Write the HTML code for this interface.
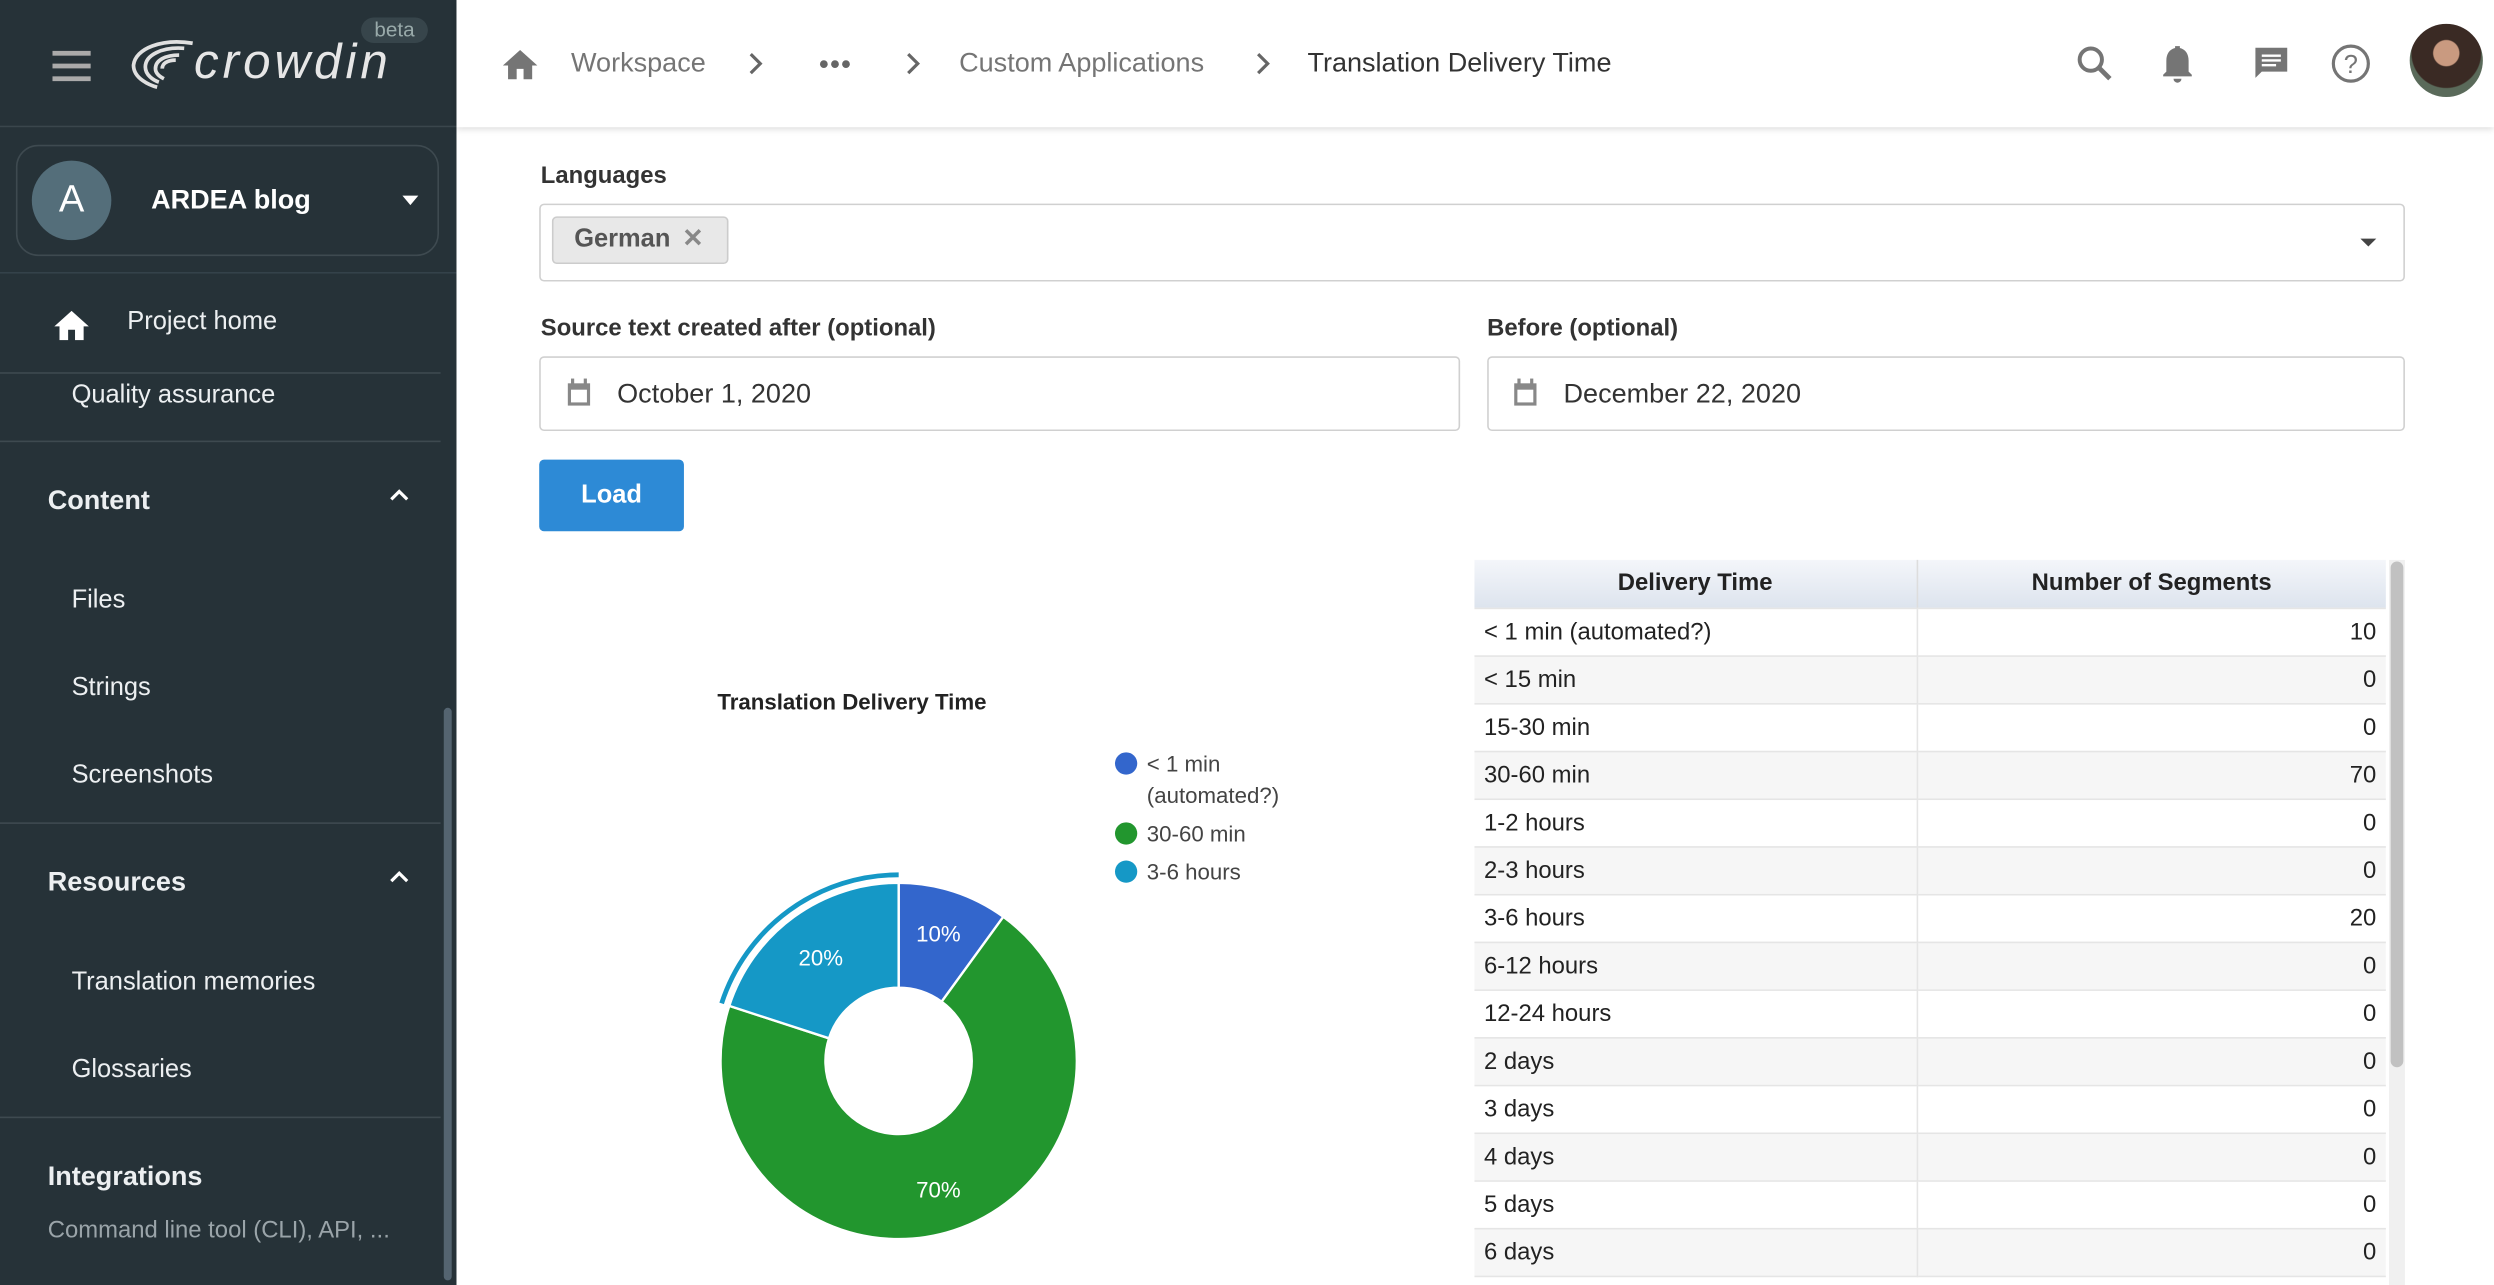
<!DOCTYPE html>
<html><head><meta charset="utf-8">
<style>
*{box-sizing:border-box;margin:0;padding:0}
html,body{width:2494px;height:1285px;overflow:hidden;background:#fff;font-family:"Liberation Sans",sans-serif}
#w{width:1568px;height:808px;transform:scale(1.590561);transform-origin:0 0;position:relative}
.sb{position:absolute;left:0;top:0;width:287px;height:808px;background:#263238;color:#fff}
.sb .t{position:absolute;font-size:16px;color:#eceff1}
.sb .h{position:absolute;font-size:17px;font-weight:bold;color:#eceff1;left:30px}
.sb .ln{position:absolute;left:0;width:277px;height:1px;background:#3e4a50}
.top{position:absolute;left:287px;top:0;width:1281px;height:80px;background:#fff;box-shadow:0 1px 4px rgba(0,0,0,.15)}
.bc{position:absolute;top:30px;font-size:17px;color:#757575}
.lbl{position:absolute;font-size:15px;font-weight:bold;color:#333}
.inp{position:absolute;border:1px solid #d0d0d0;border-radius:3px;background:#fff}
table{border-collapse:collapse;font-size:15px;color:#222}
td{height:30px;border-bottom:1px solid #e5e5e5;padding:0 6px}
</style></head><body><div id="w">
<div class="sb">
 <div style="position:absolute;left:33px;top:32px;width:24px;height:3px;background:#aaa;box-shadow:0 8px 0 #aaa,0 16px 0 #aaa"></div>
 <svg style="position:absolute;left:80px;top:24px" width="44" height="34" viewBox="0 0 40 32"><g fill="none" stroke="#e0e0e0" stroke-width="2.2"><path d="M38 3C20 0 4 6 3 16c0 8 10 12 14 13"/><path d="M33 6C20 5 10 10 10 17c0 5 5 8 8 9"/><path d="M30 10c-8 0-14 3-14 8 0 3 3 5 5 6"/><path d="M28 13c-5 0-8 2-8 5"/></g></svg>
 <div style="position:absolute;left:122px;top:22px;font-size:31px;font-style:italic;color:#e6e6e6;letter-spacing:2.5px;line-height:34px">crowdin</div>
 <div style="position:absolute;left:227px;top:11px;width:42px;height:16px;border-radius:8px;background:#37454b;color:#9aa;font-size:13px;text-align:center;line-height:16px">beta</div>
 <div class="ln" style="top:79px;width:287px;background:#3a464c"></div>
 <div style="position:absolute;left:10px;top:91px;width:266px;height:70px;border:1px solid #3e4a50;border-radius:14px;background:#263238"></div>
 <div style="position:absolute;left:20px;top:101px;width:50px;height:50px;border-radius:50%;background:#546e7a;font-size:24px;text-align:center;line-height:50px;color:#fff">A</div>
 <div class="t" style="left:95px;top:116px;font-size:17px;font-weight:bold;color:#fff">ARDEA blog</div>
 <div style="position:absolute;left:253px;top:123px;border:5px solid transparent;border-top:6px solid #fff"></div>
 <div class="ln" style="top:171px;width:287px;background:#34424a"></div>
 <svg style="position:absolute;left:32px;top:192px" width="26" height="22" viewBox="0 0 24 20"><path d="M10 20v-6h4v6h5v-8h3L12 3 2 12h3v8z" fill="#fff"/></svg>
 <div class="t" style="left:80px;top:194px">Project home</div>
 <div class="ln" style="top:234px"></div>
 <div class="t" style="left:45px;top:240px">Quality assurance</div>
 <div class="ln" style="top:277px"></div>
 <div class="h" style="top:305px">Content</div>
 <svg style="position:absolute;left:244px;top:306px" width="14" height="10"><path d="M2 8l5-5 5 5" stroke="#fff" stroke-width="2" fill="none"/></svg>
 <div class="t" style="left:45px;top:369px">Files</div>
 <div class="t" style="left:45px;top:424px">Strings</div>
 <div class="t" style="left:45px;top:479px">Screenshots</div>
 <div class="ln" style="top:517px"></div>
 <div class="h" style="top:545px">Resources</div>
 <svg style="position:absolute;left:244px;top:546px" width="14" height="10"><path d="M2 8l5-5 5 5" stroke="#fff" stroke-width="2" fill="none"/></svg>
 <div class="t" style="left:45px;top:609px">Translation memories</div>
 <div class="t" style="left:45px;top:664px">Glossaries</div>
 <div class="ln" style="top:702px"></div>
 <div class="h" style="top:730px">Integrations</div>
 <div class="t" style="left:30px;top:765px;font-size:15px;color:#9aa4a9">Command line tool (CLI), API, ...</div>
 <div style="position:absolute;left:279px;top:445px;width:5px;height:360px;border-radius:3px;background:#546470"></div>
</div>
<div class="top">
 <svg style="position:absolute;left:27px;top:28px" width="26" height="22" viewBox="0 0 24 20"><path d="M10 20v-6h4v6h5v-8h3L12 3 2 12h3v8z" fill="#757575"/></svg>
 <div class="bc" style="left:72px">Workspace</div>
 <svg style="position:absolute;left:182px;top:32px" width="12" height="16"><path d="M3 2l6 6-6 6" stroke="#666" stroke-width="2" fill="none"/></svg>
 <div class="bc" style="left:228px;top:31px;letter-spacing:1px;color:#666;font-weight:bold">•••</div>
 <svg style="position:absolute;left:281px;top:32px" width="12" height="16"><path d="M3 2l6 6-6 6" stroke="#666" stroke-width="2" fill="none"/></svg>
 <div class="bc" style="left:316px">Custom Applications</div>
 <svg style="position:absolute;left:501px;top:32px" width="12" height="16"><path d="M3 2l6 6-6 6" stroke="#666" stroke-width="2" fill="none"/></svg>
 <div class="bc" style="left:535px;color:#333">Translation Delivery Time</div>
 <svg style="position:absolute;left:1018px;top:28px" width="24" height="24"><circle cx="9.5" cy="9.5" r="7" stroke="#757575" stroke-width="2.5" fill="none"/><path d="M14.5 14.5l7 7" stroke="#757575" stroke-width="3"/></svg>
 <svg style="position:absolute;left:1070px;top:27px" width="24" height="26" viewBox="0 0 24 26"><path d="M12 25a2.5 2.5 0 0 0 2.5-2.5h-5A2.5 2.5 0 0 0 12 25zM19 18v-7c0-4-2-7-5.5-7.8V2h-3v1.2C7 4 5 7 5 11v7l-2 2v1h18v-1z" fill="#757575"/></svg>
 <svg style="position:absolute;left:1128px;top:28px" width="26" height="24" viewBox="0 0 24 24"><path d="M2 2h20v15H6l-4 4z" fill="#757575"/><path d="M6 7h12M6 10h12M6 13h9" stroke="#fff" stroke-width="1.5"/></svg>
 <svg style="position:absolute;left:1178px;top:27px" width="26" height="26"><circle cx="13" cy="13" r="11" stroke="#757575" stroke-width="2" fill="none"/><text x="13" y="19" font-size="16" text-anchor="middle" fill="#757575" font-family="Liberation Sans">?</text></svg>
 <div style="position:absolute;left:1228px;top:15px;width:46px;height:46px;border-radius:50%;background:radial-gradient(circle at 50% 40%,#c99a80 0 22%,#3a2a24 24% 60%,#5a6a5a 62%)"></div>
</div>
<div class="lbl" style="left:340px;top:102px">Languages</div>
<div class="inp" style="left:339px;top:128px;width:1173px;height:49px"></div>
<div style="position:absolute;left:347px;top:136px;width:111px;height:30px;background:#e8e8e8;border:1px solid #ccc;border-radius:3px;font-size:16px;font-weight:bold;color:#555;line-height:28px;padding-left:13px">German <span style="color:#888;margin-left:3px">✕</span></div>
<div style="position:absolute;left:1484px;top:150px;border:5px solid transparent;border-top:5px solid #444"></div>
<div class="lbl" style="left:340px;top:198px">Source text created after (optional)</div>
<div class="lbl" style="left:935px;top:198px">Before (optional)</div>
<div class="inp" style="left:339px;top:224px;width:579px;height:47px"></div>
<div class="inp" style="left:935px;top:224px;width:577px;height:47px"></div>
<svg style="position:absolute;left:356px;top:238px" width="16" height="18"><rect x="1" y="3" width="14" height="14" fill="#888"/><rect x="3" y="7" width="10" height="8" fill="#fff"/><rect x="3" y="0" width="2" height="4" fill="#888"/><rect x="11" y="0" width="2" height="4" fill="#888"/></svg>
<svg style="position:absolute;left:951px;top:238px" width="16" height="18"><rect x="1" y="3" width="14" height="14" fill="#888"/><rect x="3" y="7" width="10" height="8" fill="#fff"/><rect x="3" y="0" width="2" height="4" fill="#888"/><rect x="11" y="0" width="2" height="4" fill="#888"/></svg>
<div style="position:absolute;left:388px;top:238px;font-size:17px;color:#333">October 1, 2020</div>
<div style="position:absolute;left:983px;top:238px;font-size:17px;color:#333">December 22, 2020</div>
<div style="position:absolute;left:339px;top:289px;width:91px;height:45px;background:#2d8ad6;border-radius:3px;color:#fff;font-weight:bold;font-size:16px;text-align:center;line-height:45px">Load</div>
<svg style="position:absolute;left:0;top:0" width="927" height="808">
 <text x="451" y="446" font-size="14" font-weight="bold" fill="#222" font-family="Liberation Sans">Translation Delivery Time</text>
 <circle cx="708" cy="480" r="7" fill="#3366cc"/><text x="721" y="485" font-size="14" fill="#444" font-family="Liberation Sans">&lt; 1 min</text><text x="721" y="505" font-size="14" fill="#444" font-family="Liberation Sans">(automated?)</text>
 <circle cx="708" cy="524" r="7" fill="#22962e"/><text x="721" y="529" font-size="14" fill="#444" font-family="Liberation Sans">30-60 min</text>
 <circle cx="708" cy="548" r="7" fill="#1598c6"/><text x="721" y="553" font-size="14" fill="#444" font-family="Liberation Sans">3-6 hours</text>
 <path d="M565 555A112 112 0 0 1 630.8 576.4L592 629.8A46 46 0 0 0 565 621Z" fill="#3366cc" stroke="#fff" stroke-width="1.5"/>
 <path d="M630.8 576.4A112 112 0 1 1 458.5 632.4L521.2 652.8A46 46 0 1 0 592 629.8Z" fill="#22962e" stroke="#fff" stroke-width="1.5"/>
 <path d="M458.5 632.4A112 112 0 0 1 565 555L565 621A46 46 0 0 0 521.2 652.8Z" fill="#1598c6" stroke="#fff" stroke-width="1.5"/>
 <path d="M453.7 630.8A117 117 0 0 1 565 550" fill="none" stroke="#1598c6" stroke-width="3"/>
 <g font-size="14" fill="#fff" font-family="Liberation Sans" text-anchor="middle"><text x="590" y="592">10%</text><text x="516" y="607">20%</text><text x="590" y="753">70%</text></g>
</svg>
<div style="position:absolute;left:927px;top:352px;width:573px">
<table style="width:573px">
<tr style="background:linear-gradient(#f4f6fa,#dde4ee)"><td style="text-align:center;font-weight:bold;border-right:1px solid #ddd;width:278px">Delivery Time</td><td style="text-align:center;font-weight:bold">Number of Segments</td></tr>
<tr><td style="border-right:1px solid #e5e5e5">&lt; 1 min (automated?)</td><td style="text-align:right">10</td></tr>
<tr style="background:#f6f6f6"><td style="border-right:1px solid #e5e5e5">&lt; 15 min</td><td style="text-align:right">0</td></tr>
<tr><td style="border-right:1px solid #e5e5e5">15-30 min</td><td style="text-align:right">0</td></tr>
<tr style="background:#f6f6f6"><td style="border-right:1px solid #e5e5e5">30-60 min</td><td style="text-align:right">70</td></tr>
<tr><td style="border-right:1px solid #e5e5e5">1-2 hours</td><td style="text-align:right">0</td></tr>
<tr style="background:#f6f6f6"><td style="border-right:1px solid #e5e5e5">2-3 hours</td><td style="text-align:right">0</td></tr>
<tr><td style="border-right:1px solid #e5e5e5">3-6 hours</td><td style="text-align:right">20</td></tr>
<tr style="background:#f6f6f6"><td style="border-right:1px solid #e5e5e5">6-12 hours</td><td style="text-align:right">0</td></tr>
<tr><td style="border-right:1px solid #e5e5e5">12-24 hours</td><td style="text-align:right">0</td></tr>
<tr style="background:#f6f6f6"><td style="border-right:1px solid #e5e5e5">2 days</td><td style="text-align:right">0</td></tr>
<tr><td style="border-right:1px solid #e5e5e5">3 days</td><td style="text-align:right">0</td></tr>
<tr style="background:#f6f6f6"><td style="border-right:1px solid #e5e5e5">4 days</td><td style="text-align:right">0</td></tr>
<tr><td style="border-right:1px solid #e5e5e5">5 days</td><td style="text-align:right">0</td></tr>
<tr style="background:#f6f6f6"><td style="border-right:1px solid #e5e5e5">6 days</td><td style="text-align:right">0</td></tr>
</table></div>
<div style="position:absolute;left:1502px;top:352px;width:10px;height:456px;background:#f0f0f0"></div>
<div style="position:absolute;left:1503px;top:353px;width:8px;height:318px;border-radius:4px;background:#c1c1c1"></div>
</div></body></html>
